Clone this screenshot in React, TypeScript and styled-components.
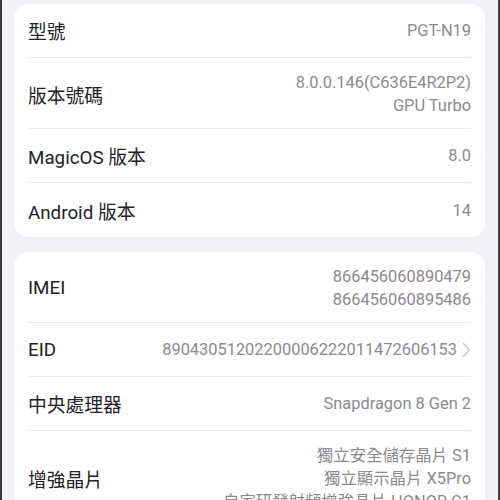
import React from "react";
import styled, { createGlobalStyle } from "styled-components";

const Global = createGlobalStyle`
  html, body { margin: 0; padding: 0; }
  body {
    background: #f1f2f6;
    font-family: Roboto, "Noto Sans CJK TC", sans-serif;
    -webkit-font-smoothing: antialiased;
  }
`;

const Page = styled.div`
  width: 500px;
  height: 500px;
  box-sizing: border-box;
  overflow: hidden;
  background: #f1f2f6;
  border-left: 2px solid #3a3a3e;
  border-right: 2px solid #45454a;
  padding: 4px 13px 0 12px;
  display: flex;
  flex-direction: column;
  gap: 15px;
`;

const Card = styled.section`
  background: #ffffff;
  border-radius: 14px;
  padding: 0 14px;
  display: flex;
  flex-direction: column;
  flex-shrink: 0;
`;

const Row = styled.div<{ $lines: number }>`
  display: flex;
  align-items: center;
  justify-content: space-between;
  box-sizing: border-box;
  min-height: ${(p) => (p.$lines > 1 ? 0 : 54)}px;
  padding: ${(p) => (p.$lines > 1 ? "13px 0 11px" : "0")};
  border-bottom: 1px solid #ebebed;
  &:last-child { border-bottom: none; }
`;

const Label = styled.div`
  font-size: 18.8px;
  color: #222224;
  white-space: nowrap;
`;

const ValueWrap = styled.div`
  display: flex;
  align-items: center;
  gap: 5px;
`;

const Value = styled.div`
  font-size: 16.4px;
  line-height: 23px;
  color: #8a8a8c;
  text-align: right;
  white-space: nowrap;
`;

const Chevron = () => (
  <svg width="9" height="16" viewBox="0 0 9 16" fill="none">
    <path d="M1.5 1.5 L7.2 8 L1.5 14.5" stroke="#c4c4c6" strokeWidth="1.4" strokeLinecap="round" strokeLinejoin="round" />
  </svg>
);

type Item = { label: string; values: string[]; chevron?: boolean };

const card1: Item[] = [
  { label: "型號", values: ["PGT-N19"] },
  { label: "版本號碼", values: ["8.0.0.146(C636E4R2P2)", "GPU Turbo"] },
  { label: "MagicOS 版本", values: ["8.0"] },
  { label: "Android 版本", values: ["14"] },
];

const card2: Item[] = [
  { label: "IMEI", values: ["866456060890479", "866456060895486"] },
  { label: "EID", values: ["89043051202200006222011472606153"], chevron: true },
  { label: "中央處理器", values: ["Snapdragon 8 Gen 2"] },
  {
    label: "增強晶片",
    values: ["獨立安全儲存晶片 S1", "獨立顯示晶片 X5Pro", "自家研發射頻增強晶片 HONOR C1"],
  },
];

const InfoCard = ({ items }: { items: Item[] }) => (
  <Card>
    {items.map((it) => (
      <Row key={it.label} $lines={it.values.length}>
        <Label>{it.label}</Label>
        <ValueWrap>
          <Value>
            {it.values.map((v) => (
              <div key={v}>{v}</div>
            ))}
          </Value>
          {it.chevron && <Chevron />}
        </ValueWrap>
      </Row>
    ))}
  </Card>
);

export default function App() {
  return (
    <>
      <Global />
      <Page>
        <InfoCard items={card1} />
        <InfoCard items={card2} />
      </Page>
    </>
  );
}
